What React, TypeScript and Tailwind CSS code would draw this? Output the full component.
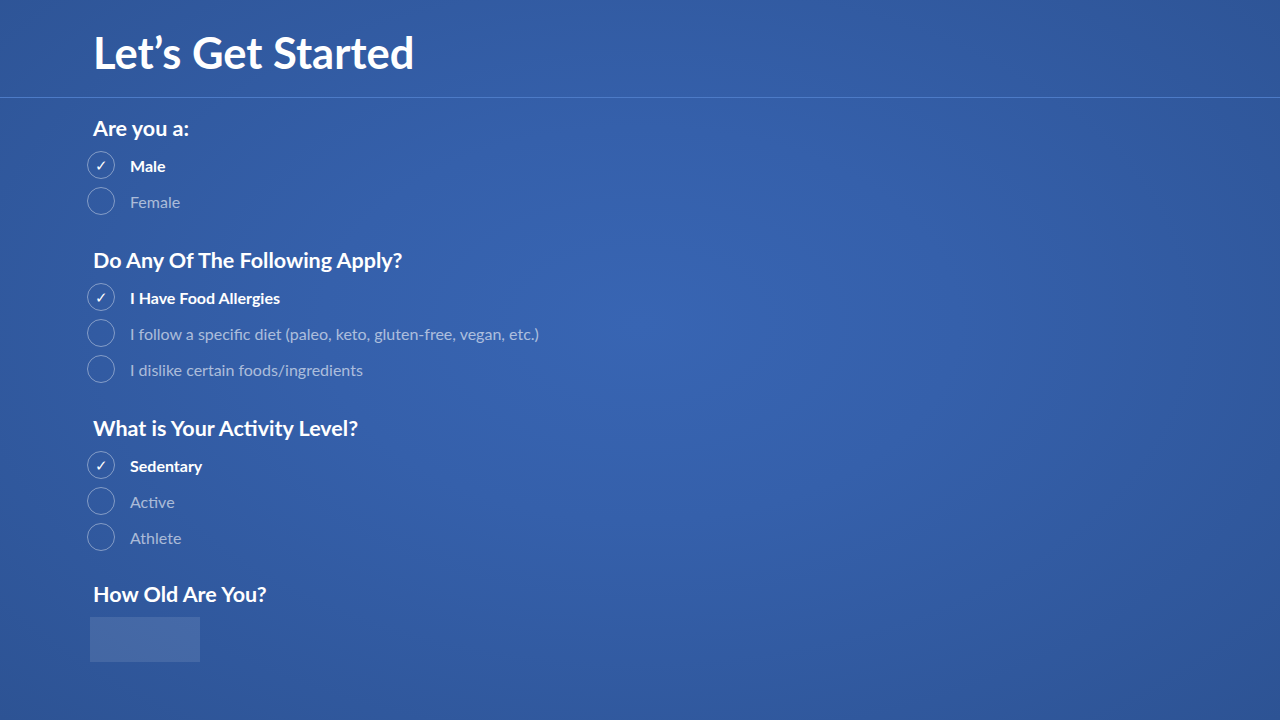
import { useState } from "react";

type Section = {
  title: string;
  options: string[];
};

const sections: Section[] = [
  { title: "Are you a:", options: ["Male", "Female"] },
  {
    title: "Do Any Of The Following Apply?",
    options: [
      "I Have Food Allergies",
      "I follow a specific diet (paleo, keto, gluten-free, vegan, etc.)",
      "I dislike certain foods/ingredients",
    ],
  },
  {
    title: "What is Your Activity Level?",
    options: ["Sedentary", "Active", "Athlete"],
  },
];

const Option = ({
  label,
  checked,
  onClick,
}: {
  label: string;
  checked: boolean;
  onClick: () => void;
}) => (
  <button
    onClick={onClick}
    className="flex items-center h-9 -ml-1.5 text-left cursor-pointer"
  >
    <span className="w-7 h-7 rounded-full border border-white/40 flex items-center justify-center text-white text-[15px] leading-none">
      {checked ? "✓" : ""}
    </span>
    <span
      className={`ml-[15px] text-[16px] pt-px ${
        checked ? "font-bold text-white" : "text-white/60"
      }`}
    >
      {label}
    </span>
  </button>
);

export default function App() {
  const [picked, setPicked] = useState<number[]>([0, 0, 0]);

  return (
    <div
      className="w-full h-[720px] overflow-hidden bg-[radial-gradient(ellipse_at_50%_45%,#3865b3_0%,#3560ab_35%,#2d5394_100%)] text-white"
      style={{ fontFamily: "Lato, 'Open Sans', sans-serif" }}
    >
      <header className="h-[98px] border-b border-[#4d7bc7] flex items-center pl-[93px]">
        <h1 className="text-[43.5px] font-bold leading-none pt-[10px] pb-[2px]">
          Let’s Get Started
        </h1>
      </header>

      <main className="pl-[93px] pt-4">
        {sections.map((section, si) => (
          <section key={section.title} className="mb-[27px]">
            <h2 className="text-[21.5px] font-bold leading-7 mb-[5px]">
              {section.title}
            </h2>
            <div className="flex flex-col">
              {section.options.map((opt, oi) => (
                <Option
                  key={opt}
                  label={opt}
                  checked={picked[si] === oi}
                  onClick={() =>
                    setPicked(picked.map((p, i) => (i === si ? oi : p)))
                  }
                />
              ))}
            </div>
          </section>
        ))}

        <section>
          <h2 className="text-[21.5px] font-bold leading-7 -mt-[2px]">
            How Old Are You?
          </h2>
          <input
            type="text"
            className="mt-[9px] -ml-[3px] w-[110px] h-[45px] bg-white/10 outline-none px-3 text-white"
          />
        </section>
      </main>
    </div>
  );
}
